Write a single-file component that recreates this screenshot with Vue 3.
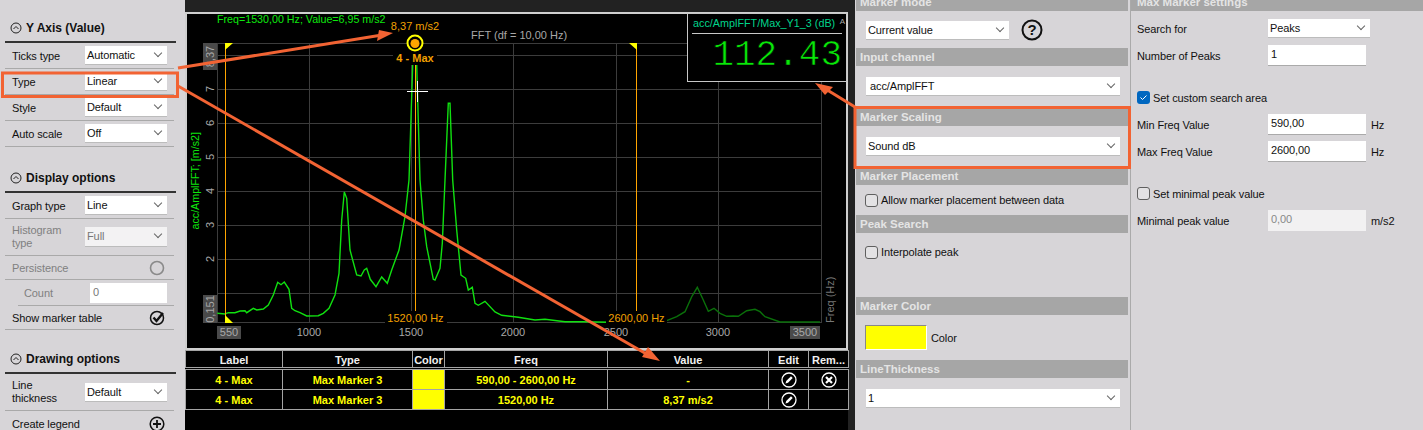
<script setup>
const xGrid = [309, 411, 513, 616, 718, 821]
const yGrid = [55, 89, 123, 157, 191, 225, 259, 293]
const xTicks = [
  { x: 309, t: '1000' },
  { x: 411, t: '1500' },
  { x: 513, t: '2000' },
  { x: 616, t: '2500' },
  { x: 718, t: '3000' }
]
const yTicks = [
  { y: 89, t: '7' },
  { y: 123, t: '6' },
  { y: 157, t: '5' },
  { y: 191, t: '4' },
  { y: 225, t: '3' },
  { y: 259, t: '2' }
]

const toLine = (pts, ox, oy) => pts.map(([x, y]) => `${(ox + x / 3).toFixed(1)},${(oy + y / 3).toFixed(1)}`).join(' ')

// traced from the spectrum, left part is the bright one
const bright = toLine([
  [97, 400], [120, 402], [130, 398], [150, 398], [165, 393], [180, 392], [185, 398], [205, 385], [215, 390],
  [235, 387], [250, 375], [265, 345], [278, 307], [288, 314], [298, 306], [312, 328], [320, 385], [330, 392],
  [345, 398], [365, 408], [400, 407], [415, 400], [432, 385], [450, 345], [462, 280], [470, 120], [478, 36],
  [485, 55], [495, 210], [515, 285], [528, 288], [538, 270], [545, 265], [556, 298], [573, 320], [590, 291],
  [607, 310], [620, 270], [642, 210], [660, 110], [672, 0], [683, -345], [689, -411], [695, -345], [705, 0],
  [715, 120], [725, 200], [745, 298], [750, 300], [765, 265], [772, 190], [780, 0], [790, -230], [795, -230],
  [803, 0], [815, 150], [828, 285], [842, 295], [850, 330], [862, 322], [870, 370], [880, 376], [900, 364],
  [930, 396], [950, 406], [1000, 412], [1050, 420], [1080, 418], [1140, 425], [1190, 425], [1278, 427]
], 185, 180)
const dim = toLine([
  [440, 422], [470, 410], [495, 395], [515, 350], [532, 322], [550, 360], [565, 394], [582, 385], [600, 400],
  [620, 409], [640, 408], [655, 409], [680, 392], [705, 388], [720, 395], [735, 410], [780, 426], [900, 426]
], 520, 180)

const rows = [
  { label: '4 - Max', type: 'Max Marker 3', freq: '590,00 - 2600,00 Hz', value: '-', removable: true },
  { label: '4 - Max', type: 'Max Marker 3', freq: '1520,00 Hz', value: '8,37 m/s2', removable: false }
]
</script>

<template>
  <div class="page">
    <aside class="left">
      <div class="sec-title first">
        <svg class="collapse" width="12" height="12" viewBox="0 0 12 12"><circle cx="6" cy="6" r="5" /><path d="M3.500 7 6 4.500 8.500 7" /></svg>
        Y Axis (Value)
      </div>
      <div class="row"><span>Ticks type</span><div class="sel">Automatic<i class="chev"></i></div></div>
      <div class="row"><span>Type</span><div class="sel">Linear<i class="chev"></i></div></div>
      <div class="row"><span>Style</span><div class="sel">Default<i class="chev"></i></div></div>
      <div class="row"><span>Auto scale</span><div class="sel">Off<i class="chev"></i></div></div>

      <div class="sec-title">
        <svg class="collapse" width="12" height="12" viewBox="0 0 12 12"><circle cx="6" cy="6" r="5" /><path d="M3.500 7 6 4.500 8.500 7" /></svg>
        Display options
      </div>
      <div class="row"><span>Graph type</span><div class="sel">Line<i class="chev"></i></div></div>
      <div class="row tall off"><span>Histogram<br />type</span><div class="sel dis">Full<i class="chev"></i></div></div>
      <div class="row short off">
        <span>Persistence</span>
        <svg class="tog" width="16" height="16" viewBox="0 0 16 16"><circle cx="8" cy="8" r="6.500" fill="none" stroke="#8a8a8a" stroke-width="1.600" /></svg>
      </div>
      <div class="row indent off"><span>Count</span><div class="inp">0</div></div>
      <div class="row short">
        <span>Show marker table</span>
        <svg class="tog" width="16" height="16" viewBox="0 0 16 16">
          <circle cx="8" cy="8" r="6.500" fill="none" stroke="#111" stroke-width="1.500" />
          <path d="M4.500 7.500 7.500 11 14 3" fill="none" stroke="#111" stroke-width="2.400" />
        </svg>
      </div>

      <div class="sec-title third">
        <svg class="collapse" width="12" height="12" viewBox="0 0 12 12"><circle cx="6" cy="6" r="5" /><path d="M3.500 7 6 4.500 8.500 7" /></svg>
        Drawing options
      </div>
      <div class="row tall"><span>Line<br />thickness</span><div class="sel">Default<i class="chev"></i></div></div>
      <div class="row">
        <span>Create legend</span>
        <svg class="tog" width="16" height="16" viewBox="0 0 16 16">
          <circle cx="8" cy="8" r="6.800" fill="none" stroke="#111" stroke-width="1.500" />
          <path d="M8 4v8M4 8h8" stroke="#111" stroke-width="1.800" />
        </svg>
      </div>
    </aside>

    <main class="middle">
      <div class="strip"></div>
      <div class="graph">
        <svg class="plot" width="659" height="334" viewBox="187 14 659 334">
          <g stroke="#3c3c3c" stroke-width="1">
            <line v-for="x in xGrid" :key="x" :x1="x + 0.5" y1="43" :x2="x + 0.5" y2="323" />
            <line v-for="y in yGrid" :key="y" x1="217" :y1="y + 0.5" x2="821" :y2="y + 0.5" />
            <line x1="217" y1="43.500" x2="821" y2="43.500" />
            <line x1="217" y1="322.500" x2="821" y2="322.500" />
            <line x1="217.500" y1="43" x2="217.500" y2="323" />
          </g>

          <polyline :points="bright" fill="none" stroke="#10e010" stroke-width="1.400" />
          <polyline :points="dim" fill="none" stroke="#0a700a" stroke-width="1.400" />

          <g stroke="#ffa500" stroke-width="1">
            <line x1="225.500" y1="43" x2="225.500" y2="322" />
            <line x1="415.500" y1="64" x2="415.500" y2="311" />
            <line x1="636.500" y1="43" x2="636.500" y2="311" />
          </g>
          <polygon points="225,43 233,43 225,50" fill="#ff0" />
          <polygon points="629,43 637,43 637,50" fill="#ff0" />
          <polygon points="225,315 225,323 233,323" fill="#ff0" />

          <!-- marker and its labels -->
          <rect x="393" y="50" width="44" height="15" fill="#000" />
          <circle cx="415" cy="43" r="7.500" fill="#000" stroke="#ff0" stroke-width="2" />
          <circle cx="415" cy="43.500" r="4.500" fill="#ffa500" />
          <text class="mark" x="415" y="30" text-anchor="middle">8,37 m/s2</text>
          <text class="mark bold" x="415" y="62" text-anchor="middle">4 - Max</text>

          <g stroke="#fff" stroke-width="1">
            <line x1="407" y1="91.500" x2="428" y2="91.500" />
            <line x1="417.500" y1="81" x2="417.500" y2="102" />
          </g>

          <rect x="385" y="311" width="62" height="15" fill="#000" />
          <rect x="606" y="311" width="61" height="15" fill="#000" />
          <text class="mark" x="415.500" y="322" text-anchor="middle">1520,00 Hz</text>
          <text class="mark" x="636.500" y="322" text-anchor="middle">2600,00 Hz</text>

          <text class="green" x="217" y="23">Freq=1530,00 Hz; Value=6,95 m/s2</text>
          <text class="tick" x="471" y="39">FFT (df = 10,00 Hz)</text>

          <rect x="217" y="326" width="24" height="13" fill="#4a4a4a" />
          <rect x="790" y="326" width="30" height="13" fill="#4a4a4a" />
          <text class="tick" x="229" y="336" text-anchor="middle">550</text>
          <text v-for="t in xTicks" :key="t.x" class="tick" :x="t.x" y="336" text-anchor="middle">{{ t.t }}</text>
          <text class="tick" x="805" y="336" text-anchor="middle">3500</text>

          <rect x="203" y="43" width="14" height="27" fill="#4a4a4a" />
          <rect x="203" y="295" width="14" height="28" fill="#4a4a4a" />
          <text class="tick" transform="translate(214 56.500) rotate(-90)" text-anchor="middle">8,37</text>
          <text class="tick" transform="translate(214 309) rotate(-90)" text-anchor="middle">0,151</text>
          <text v-for="t in yTicks" :key="t.y" class="tick" :transform="`translate(214 ${t.y}) rotate(-90)`" text-anchor="middle">{{ t.t }}</text>
          <text class="tick faint" transform="translate(834 323) rotate(-90)">Freq (Hz)</text>
          <text class="green" transform="translate(199 229.500) rotate(-90)">acc/AmplFFT; [m/s2]</text>
        </svg>

        <div class="readout">
          <div class="readout-title">acc/AmplFFT/Max_Y1_3 (dB)<span class="readout-a">A</span></div>
          <div class="readout-value">112.43</div>
        </div>
      </div>

      <table class="markers">
        <colgroup>
          <col style="width: 97px" /><col style="width: 130px" /><col style="width: 32px" /><col style="width: 163px" />
          <col style="width: 161px" /><col style="width: 40px" /><col style="width: 40px" />
        </colgroup>
        <thead>
          <tr><th>Label</th><th>Type</th><th>Color</th><th>Freq</th><th>Value</th><th>Edit</th><th>Rem...</th></tr>
        </thead>
        <tbody>
          <tr v-for="(r, i) in rows" :key="i">
            <td>{{ r.label }}</td>
            <td>{{ r.type }}</td>
            <td class="swatch"></td>
            <td>{{ r.freq }}</td>
            <td>{{ r.value }}</td>
            <td>
              <svg class="cell-ico" width="16" height="16" viewBox="0 0 16 16">
                <circle cx="8" cy="8" r="7" fill="none" stroke="#fff" stroke-width="1.300" />
                <path d="M4.500 11.500 5.200 9 10 4.300 11.700 6 7 10.800Z" fill="#fff" />
              </svg>
            </td>
            <td>
              <svg v-if="r.removable" class="cell-ico" width="16" height="16" viewBox="0 0 16 16">
                <circle cx="8" cy="8" r="7" fill="none" stroke="#fff" stroke-width="1.300" />
                <path d="M5 5l6 6M11 5l-6 6" stroke="#fff" stroke-width="2.200" />
              </svg>
            </td>
          </tr>
        </tbody>
      </table>
    </main>

    <section class="props">
      <div class="group" style="height: 55px">
        <div class="head">Marker mode</div>
        <div class="body mode">
          <div class="sel w143">Current value<i class="chev"></i></div>
          <svg width="22" height="22" viewBox="0 0 22 22">
            <circle cx="11" cy="11" r="9.500" fill="none" stroke="#111" stroke-width="2" />
            <text class="help" x="11" y="16" text-anchor="middle">?</text>
          </svg>
        </div>
      </div>
      <div class="group" style="height: 60px">
        <div class="head">Input channel</div>
        <div class="body"><div class="sel wide ind">acc/AmplFFT<i class="chev"></i></div></div>
      </div>
      <div class="group" style="height: 59px">
        <div class="head">Marker Scaling</div>
        <div class="body"><div class="sel wide">Sound dB<i class="chev"></i></div></div>
      </div>
      <div class="group" style="height: 48px">
        <div class="head">Marker Placement</div>
        <label class="check"><i class="box"></i>Allow marker placement between data</label>
      </div>
      <div class="group" style="height: 82px">
        <div class="head">Peak Search</div>
        <label class="check lower"><i class="box"></i>Interpolate peak</label>
      </div>
      <div class="group" style="height: 63px">
        <div class="head">Marker Color</div>
        <div class="color-row"><i class="color-box"></i>Color</div>
      </div>
      <div class="group">
        <div class="head">LineThickness</div>
        <div class="body"><div class="sel wide">1<i class="chev"></i></div></div>
      </div>
    </section>

    <section class="settings">
      <div class="head">Max Marker settings</div>
      <div class="frow"><span>Search for</span><div class="sel w102">Peaks<i class="chev"></i></div></div>
      <div class="frow"><span>Number of Peaks</span><div class="inp w98">1</div></div>
      <label class="frow gap">
        <i class="box on">
          <svg width="13" height="13" viewBox="0 0 13 13"><path d="M3.500 6.500 5.500 8.500 9.500 4.500" fill="none" stroke="#fff" stroke-width="1" /></svg>
        </i>Set custom search area
      </label>
      <div class="frow"><span>Min Freq Value</span><div class="inp w98">590,00</div><em>Hz</em></div>
      <div class="frow"><span>Max Freq Value</span><div class="inp w98">2600,00</div><em>Hz</em></div>
      <label class="frow gap"><i class="box"></i>Set minimal peak value</label>
      <div class="frow"><span>Minimal peak value</span><div class="inp w98 dis">0,00</div><em>m/s2</em></div>
    </section>

    <!-- callouts drawn over the screenshot -->
    <svg class="callouts" width="1423" height="430" viewBox="0 0 1423 430">
      <g fill="none" stroke="#f26333" stroke-width="3">
        <rect x="2.500" y="73" width="175" height="23.500" />
        <rect x="855" y="107.500" width="274.500" height="60" />
        <line x1="178" y1="68" x2="382" y2="35" />
        <line x1="178" y1="86" x2="650" y2="356" />
        <line x1="855" y1="107" x2="824" y2="88" />
      </g>
      <g fill="#f26333">
        <polygon points="393,33 377,41 379,30" />
        <polygon points="660,361 642,357 648,347" />
        <polygon points="815,83 833,87 825,95" />
      </g>
    </svg>
  </div>
</template>

<style scoped>
.page {
  position: relative;
  display: flex;
  width: 1423px;
  height: 430px;
  overflow: hidden;
  background: #d7d5d8;
  font-family: "Liberation Sans", Arial, sans-serif;
  font-size: 11px;
  letter-spacing: -0.1px;
  color: #111;
}

/* left options column */
.left {
  flex: none;
  width: 185px;
  padding-left: 5px;
  box-sizing: border-box;
}
.sec-title {
  display: flex;
  align-items: center;
  gap: 4px;
  box-sizing: border-box;
  width: 171px;
  height: 24px;
  margin-top: 22px;
  padding: 0 0 5px 5px;
  border-bottom: 2px solid #333;
  font-weight: 700;
  font-size: 12px;
  letter-spacing: 0;
}
.sec-title.first {
  margin-top: 19px;
}
.sec-title.third {
  margin-top: 20px;
}
.collapse {
  fill: none;
  stroke: #222;
  stroke-width: 1;
}
.row {
  display: flex;
  align-items: center;
  justify-content: space-between;
  box-sizing: border-box;
  width: 169px;
  height: 26px;
  padding: 0 7px;
  border-bottom: 1px solid #a9a9a9;
}
.row.tall {
  height: 37px;
  line-height: 13px;
}
.row.short {
  height: 24px;
}
.row.indent {
  margin-left: 13px;
  width: 156px;
  padding-left: 6px;
}
.off {
  color: #808080;
}
.tog {
  margin-right: 2px;
}
.sel {
  position: relative;
  box-sizing: border-box;
  width: 82px;
  height: 19px;
  padding-left: 2px;
  line-height: 18px;
  background: #fff;
  border-bottom: 1px solid #bcbcbc;
  color: #111;
}
.sel.dis {
  background: #f3f2f3;
  color: #777;
  height: 20px;
}
.chev {
  position: absolute;
  right: 6px;
  top: 4px;
  width: 5px;
  height: 5px;
  border-right: 1px solid #666;
  border-bottom: 1px solid #666;
  transform: rotate(45deg);
}
.inp {
  box-sizing: border-box;
  width: 77px;
  height: 20px;
  padding-left: 3px;
  line-height: 18px;
  background: #fff;
  border-bottom: 1px solid #aaa;
  color: #111;
}
.off .inp {
  color: #777;
  border-bottom: 0;
}

/* graph and table */
.middle {
  flex: none;
  width: 670px;
  box-sizing: border-box;
  padding-right: 7px;
  background: #222 linear-gradient(#222 12px, #000 12px) no-repeat 0 0 / 663px 100%;
  letter-spacing: 0;
}
.strip {
  height: 12px;
}
.graph {
  position: relative;
  box-sizing: border-box;
  width: 663px;
  height: 338px;
  border: 2px solid #cfcfcf;
  background: #000;
}
.plot {
  display: block;
}
.plot text {
  font-size: 11px;
}
.plot .green {
  fill: #0ee80e;
  font-size: 10.700px;
}
.plot .tick {
  fill: #a8a8a8;
}
.plot .faint {
  fill: #777;
}
.plot .mark {
  fill: #f2a000;
}
.plot .bold {
  font-weight: 700;
}
.readout {
  position: absolute;
  top: -1px;
  right: -1px;
  box-sizing: border-box;
  width: 160px;
  height: 69px;
  padding: 0 4px;
  background: #000;
  border: 1px solid #c8c8c8;
}
.readout-title {
  position: relative;
  height: 19px;
  line-height: 18px;
  padding-left: 1px;
  border-bottom: 1px solid #c8c8c8;
  color: #00d48c;
  font-size: 10.800px;
}
.readout-a {
  position: absolute;
  top: -1px;
  right: -3px;
  font-size: 8px;
  color: #aaa;
}
.readout-value {
  padding-top: 3px;
  text-align: right;
  font-family: "Liberation Mono", monospace;
  font-size: 36px;
  line-height: 38px;
  color: #08e808;
  -webkit-text-stroke: 0.7px #000;
}
.markers {
  table-layout: fixed;
  width: 663px;
  border-collapse: collapse;
  background: #000;
  font-size: 11px;
  font-weight: 700;
  text-align: center;
}
.markers th,
.markers td {
  padding: 0;
  border: 1px solid #a4a4a4;
  overflow: hidden;
  white-space: nowrap;
}
.markers th {
  height: 15px;
  padding-top: 1px;
  color: #f0f0f0;
  border-bottom: 3px double #a4a4a4;
}
.markers td {
  height: 19px;
  color: #ff0;
}
.markers .swatch {
  background: #ff0;
}
.cell-ico {
  display: block;
  margin: 0 auto;
}

/* marker properties */
.props {
  flex: none;
  width: 275px;
  padding-left: 1px;
  margin-top: -7px;
  box-sizing: border-box;
}
.head {
  box-sizing: border-box;
  height: 18px;
  line-height: 18px;
  padding-left: 4px;
  background: #a6a6a6;
  color: #e4e4e4;
  font-size: 11.500px;
  font-weight: 700;
  letter-spacing: 0;
}
.props .head {
  width: 272px;
}
.body {
  padding: 11px 0 0 10px;
}
.mode {
  display: flex;
  align-items: center;
  gap: 12px;
  padding-top: 8px;
  padding-bottom: 0;
}
.sel.w143 {
  width: 143px;
}
.sel.wide {
  width: 254px;
}
.sel.ind {
  padding-left: 4px;
}
.check {
  display: flex;
  align-items: center;
  gap: 3px;
  height: 14px;
  padding: 8px 0 0 9px;
}
.check.lower {
  padding-top: 12px;
}
.box {
  display: block;
  flex: none;
  box-sizing: border-box;
  width: 13px;
  height: 13px;
  background: #e3e2e4;
  border: 1px solid #5f5f5f;
  border-radius: 3px;
}
.box.on {
  background: #0067c0;
  border: 0;
}
.box.on svg {
  display: block;
}
.color-row {
  display: flex;
  align-items: center;
  gap: 4px;
  padding: 10px 0 0 9px;
}
.color-box {
  display: block;
  box-sizing: border-box;
  width: 62px;
  height: 25px;
  background: #ff0;
  border: 1px solid;
  border-color: #888 #fff #fff #888;
}

/* max marker settings */
.settings {
  flex: none;
  width: 293px;
  margin-top: -7px;
  box-sizing: border-box;
  border-left: 1px solid #aaa;
}
.settings .head {
  padding-left: 6px;
  margin-bottom: 4px;
}
.frow {
  display: flex;
  align-items: center;
  height: 27px;
  padding-left: 6px;
}
.frow > span {
  width: 131px;
}
.frow.gap {
  margin-top: 15px;
  gap: 3px;
}
.frow em {
  margin-left: 5px;
  font-style: normal;
}
.sel.w102 {
  width: 102px;
}
.inp.w98 {
  width: 98px;
  height: 21px;
  line-height: 19px;
}
.inp.dis {
  background: #f2f1f2;
  color: #888;
  border-bottom: 0;
}
.help {
  font-family: "Liberation Sans", Arial, sans-serif;
  font-size: 15px;
  font-weight: 700;
  fill: #111;
}

.callouts {
  position: absolute;
  left: 0;
  top: 0;
  pointer-events: none;
}
</style>

<style>
body {
  background: #d7d5d8;
}
</style>
